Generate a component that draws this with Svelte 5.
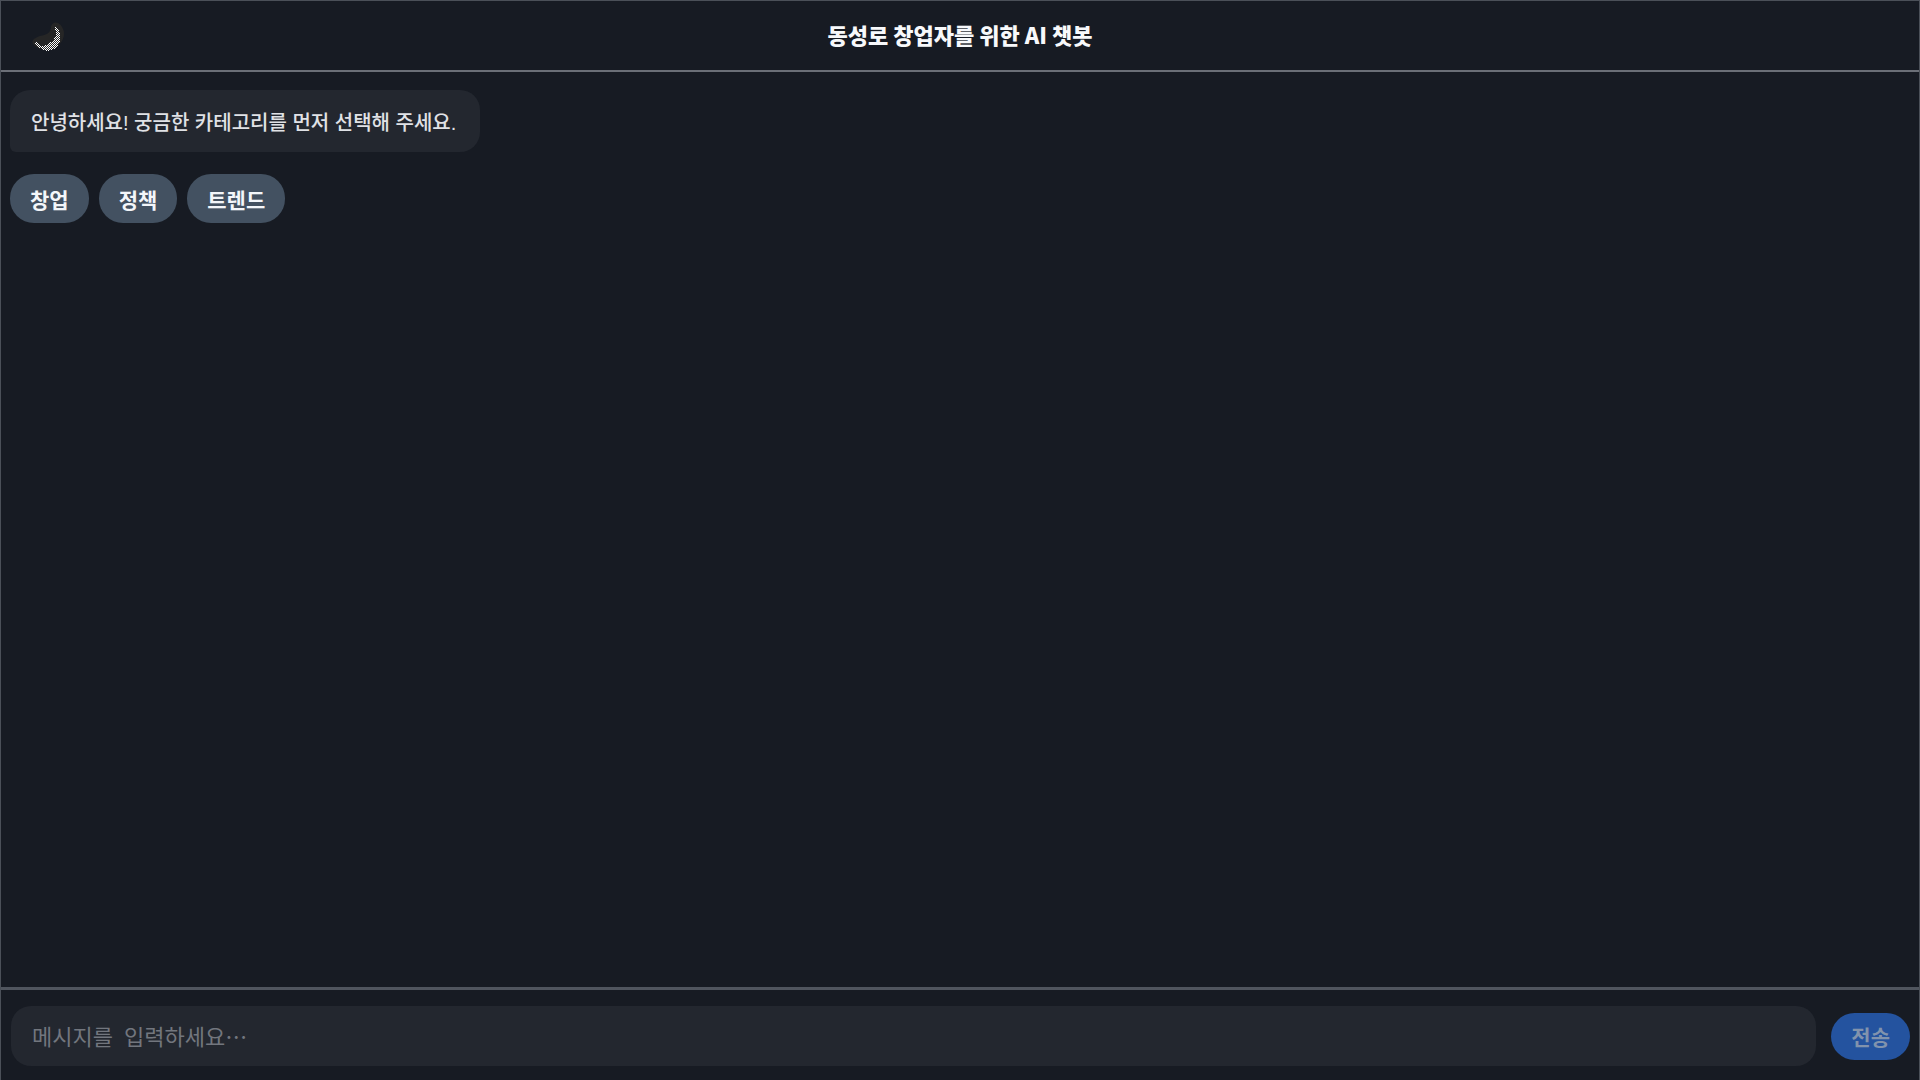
<script lang="ts">
  const categories = ['창업', '정책', '트렌드'];
  let message = $state('');
</script>

<div class="app">
  <header>
    <button class="theme" type="button" aria-label="다크 모드">
      <svg viewBox="0 0 36 36" width="36" height="36" aria-hidden="true">
        <defs>
          <pattern id="mesh" width="2" height="2" patternUnits="userSpaceOnUse">
            <rect width="1" height="1" fill="#fff" />
            <rect x="1" y="1" width="1" height="1" fill="#fff" />
          </pattern>
        </defs>
        <path class="halo" d="M19 9C20 3 27 3 30 9C35 17 30 27 21 31C13 34 5 31 1 26C-1 22 3 20 8 18C14 17 19 15 19 9Z" />
        <path class="crescent" shape-rendering="crispEdges" fill="url(#mesh)" d="M22 9L24 9C29 14 30 21 26 27C21 35 10 34 6 28L2 26L4 24L10 28C16 28 19 24 22 21C25 17 24 13 22 9Z" />
      </svg>
    </button>
    <h1>동성로 창업자를 위한 AI 챗봇</h1>
  </header>

  <main>
    <p class="bubble">안녕하세요! 궁금한 카테고리를 먼저 선택해 주세요.</p>
    <div class="chips">
      {#each categories as category}
        <button type="button">{category}</button>
      {/each}
    </div>
  </main>

  <form onsubmit={(e) => e.preventDefault()}>
    <input type="text" aria-label="메시지" placeholder="메시지를 입력하세요…" bind:value={message} />
    <button class="send" type="submit" disabled={!message}>전송</button>
  </form>
</div>

<style>
  :global(body) {
    background: #171b23;
  }

  .app {
    box-sizing: border-box;
    min-height: 100vh;
    display: flex;
    flex-direction: column;
    border: 1px solid #4b5058;
    border-bottom: 0;
    background: #171b23;
    color: #e0e2e6;
    font-family: "Noto Sans CJK KR", sans-serif;
  }

  button,
  input {
    font-family: inherit;
    border: 0;
    margin: 0;
  }

  header {
    display: grid;
    grid-template-columns: 1fr auto 1fr;
    align-items: center;
    height: 69px;
    padding: 0 31px;
    border-bottom: 2px solid #6b6f77;
  }

  .theme {
    justify-self: start;
    padding: 0;
    background: none;
  }

  .theme svg {
    display: block;
  }

  .halo {
    fill: #262626;
  }

  h1 {
    margin: 0;
    padding-bottom: 3px;
    font-size: 22px;
    line-height: 32px;
    font-weight: 900;
    color: #f8f9fb;
  }

  main {
    flex: 1;
    display: flex;
    flex-direction: column;
    align-items: flex-start;
    gap: 22px;
    padding: 18px 9px;
  }

  .bubble {
    margin: 0;
    padding: 18px 24px 14px 21px;
    border-radius: 20px 20px 20px 6px;
    background: #23272f;
    font-family: "Liberation Sans", "Noto Sans CJK KR", sans-serif;
    font-size: 20px;
    line-height: 30px;
    font-weight: 500;
  }

  .chips {
    display: flex;
    gap: 10px;
  }

  .chips button {
    padding: 10px 20px 8px;
    border-radius: 24px;
    background: #435161;
    color: #f3f6fa;
    font-size: 21px;
    line-height: 31px;
    font-weight: 700;
  }

  form {
    display: flex;
    align-items: center;
    gap: 15px;
    padding: 16px 9px 14px 10px;
    border-top: 3px solid #50555e;
  }

  input {
    flex: 1;
    min-width: 0;
    box-sizing: border-box;
    height: 60px;
    padding: 0 21px 2px;
    border-radius: 20px;
    background: #23272f;
    color: #e7e9ed;
    font-family: "Noto Sans Mono CJK KR", "Noto Sans CJK KR", monospace;
    font-size: 22px;
  }

  input::placeholder {
    color: #72767e;
    opacity: 1;
  }

  .send {
    padding: 8px 20px;
    border-radius: 24px;
    background: #24539f;
    color: #8193ad;
    font-size: 21px;
    line-height: 31px;
    font-weight: 700;
  }
</style>
